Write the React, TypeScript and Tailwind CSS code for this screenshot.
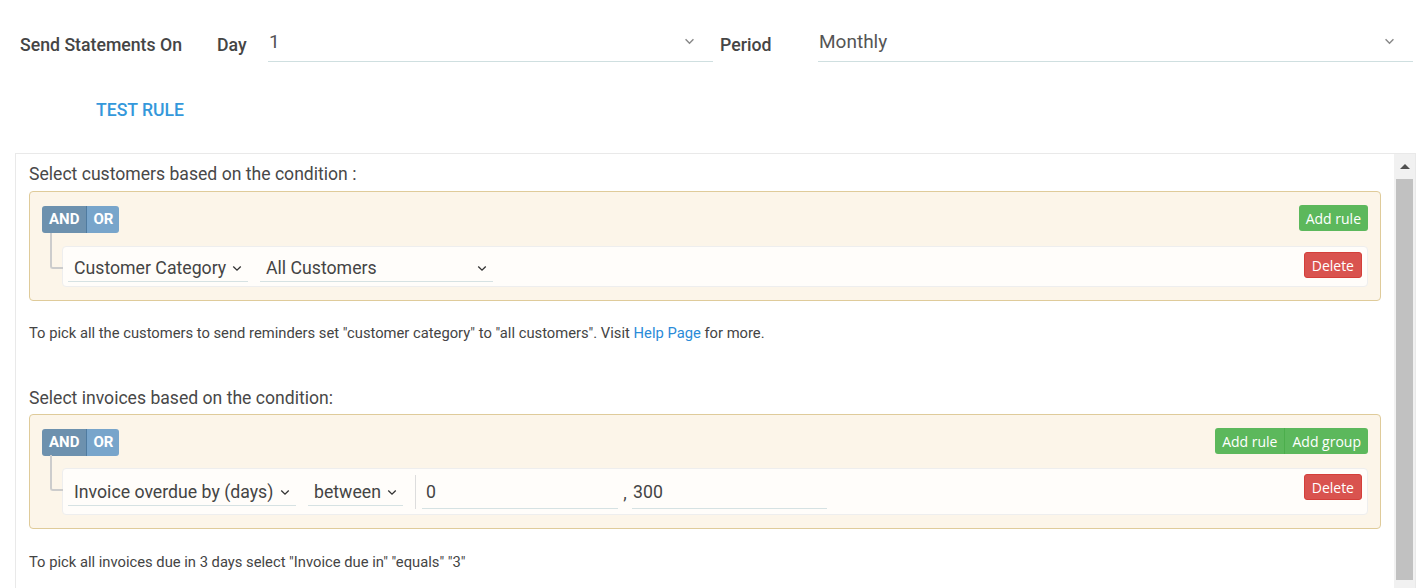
import React from "react";

const Chevron: React.FC<{ className?: string }> = ({ className }) => (
  <svg viewBox="0 0 12 8" className={className} fill="none" stroke="currentColor" strokeWidth="1.6">
    <path d="M1.5 1.5 6 6l4.5-4.5" />
  </svg>
);

const TopSelect: React.FC<{ value: string; className?: string }> = ({ value, className }) => (
  <div className={`relative h-[38px] border-b border-[#cfdfe0] ${className ?? ""}`}>
    <span className="absolute left-[1px] top-[4px] text-[19px] text-[#555]">{value}</span>
    <Chevron className="absolute right-[18px] top-[14px] w-[11px] h-[7px] text-[#888]" />
  </div>
);

const RuleSelect: React.FC<{ value: string; width: string }> = ({ value, width }) => (
  <div className={`flex items-center justify-between h-[29px] pt-[3px] border-b border-[#d6e2e3] pl-[6px] pr-[6px] ${width}`}>
    <span className="text-[17.7px] text-[#444] whitespace-nowrap">{value}</span>
    <Chevron className="w-[10px] h-[7px] text-[#333] shrink-0" />
  </div>
);

const AndOr = () => (
  <div className="flex h-[27px] mt-[1px] rounded-[3px] overflow-hidden text-[15px] font-bold text-white">
    <span className="flex items-center px-[7px] bg-[#6d91ae] border-r border-[#4f7ba0]">AND</span>
    <span className="flex items-center px-[6px] bg-[#78a5cb]">OR</span>
  </div>
);

const GreenBtn: React.FC<{ children: React.ReactNode; className?: string }> = ({ children, className }) => (
  <button className={`h-[26px] px-[7px] bg-[#5cb85c] text-white text-[14px] font-['Open_Sans',sans-serif] ${className ?? ""}`}>
    {children}
  </button>
);

const DeleteBtn = () => (
  <button className="self-start mt-[5px] h-[26px] px-[7px] rounded-[3px] bg-[#d9534f] border border-[#d43f3a] text-white text-[14px] font-['Open_Sans',sans-serif]">
    Delete
  </button>
);

const Connector = () => (
  <div className="absolute left-[-13px] top-[-14px] w-[13px] h-[36px] border-l-2 border-b-2 border-[#cccccc] rounded-bl-[3px]" />
);

export default function App() {
  return (
    <div className="h-[588px] overflow-hidden bg-white font-['Roboto',sans-serif] text-[#444]">
      <div className="flex items-center pt-[24px] pl-[20px] pr-[9px]">
        <span className="w-[197px] pt-[4px] text-[17.7px] font-medium text-[#454545]">Send Statements On</span>
        <span className="w-[51px] pt-[4px] text-[17.7px] font-medium text-[#454545]">Day</span>
        <TopSelect value="1" className="w-[445px]" />
        <span className="ml-[7px] w-[98px] pt-[4px] text-[17.7px] font-medium text-[#454545]">Period</span>
        <TopSelect value="Monthly" className="flex-1" />
      </div>

      <div className="pl-[96px] pt-[35px] h-[91px]">
        <span className="text-[17.6px] font-medium text-[#3498db]">TEST RULE</span>
      </div>

      <div className="ml-[15px] mr-[6px] h-[440px] flex border border-[#e9e9e9]">
        <div className="flex-1 pl-[13px] pr-[13px] pt-[10px]">
          <div className="text-[17.6px] text-[#484848] leading-[21px]">Select customers based on the condition :</div>
          <div className="mt-[6px] rounded-[4px] border border-[#dfcb9a] bg-[#fcf5e9] pt-[13px] pb-[13px] px-[12px]">
            <div className="flex justify-between items-start">
              <AndOr />
              <GreenBtn className="rounded-[3px]">Add rule</GreenBtn>
            </div>
            <div className="relative mt-[13px] ml-[20px] h-[41px] flex items-center justify-between rounded-[4px] border border-[#eeeeee] bg-[#fffdfa] pl-[5px] pr-[5px]">
              <Connector />
              <div className="flex items-center gap-[12px] pt-[2px]">
                <RuleSelect value="Customer Category" width="w-[180px]" />
                <RuleSelect value="All Customers" width="w-[233px]" />
              </div>
              <DeleteBtn />
            </div>
          </div>

          <p className="mt-[23px] text-[14.75px] text-[#444] leading-[18px]">
            To pick all the customers to send reminders set "customer category" to "all customers". Visit{" "}
            <span className="text-[#2a8bd8]">Help Page</span> for more.
          </p>

          <div className="mt-[46px] text-[17.6px] text-[#484848] leading-[21px]">Select invoices based on the condition:</div>
          <div className="mt-[5px] rounded-[4px] border border-[#dfcb9a] bg-[#fcf5e9] pt-[13px] pb-[13px] px-[12px]">
            <div className="flex justify-between items-start">
              <AndOr />
              <div className="flex rounded-[3px] overflow-hidden">
                <GreenBtn className="border-r border-[#4cae4c]">Add rule</GreenBtn>
                <GreenBtn>Add group</GreenBtn>
              </div>
            </div>
            <div className="relative mt-[12px] ml-[20px] h-[47px] flex items-center justify-between rounded-[4px] border border-[#eeeeee] bg-[#fffdfa] pl-[5px] pr-[5px]">
              <Connector />
              <div className="flex items-center gap-[12px]">
                <RuleSelect value="Invoice overdue by (days)" width="w-[228px]" />
                <RuleSelect value="between" width="w-[95px]" />
                <div className="flex items-center h-[34px] border-l border-[#dddddd] pl-[6px]">
                  <div className="w-[196px] h-[34px] pt-[3px] flex items-center border-b border-[#d6e2e3] pl-[4px] text-[17.7px] text-[#444]">0</div>
                  <span className="w-[14px] pt-[3px] text-center text-[17.7px] text-[#444]">,</span>
                  <div className="w-[195px] h-[34px] pt-[3px] flex items-center border-b border-[#d6e2e3] pl-[1px] text-[17.7px] text-[#444]">300</div>
                </div>
              </div>
              <DeleteBtn />
            </div>
          </div>

          <p className="mt-[24px] text-[14.75px] text-[#444] leading-[18px]">
            To pick all invoices due in 3 days select "Invoice due in" "equals" "3"
          </p>
        </div>

        <div className="w-[21px] bg-[#f1f1f1] flex flex-col items-center">
          <div className="h-[25px] flex items-center justify-center">
            <div className="w-0 h-0 border-l-[5px] border-r-[5px] border-b-[5px] border-l-transparent border-r-transparent border-b-[#505050]" />
          </div>
          <div className="w-[17px] h-[401px] bg-[#c1c1c1]" />
        </div>
      </div>
    </div>
  );
}
